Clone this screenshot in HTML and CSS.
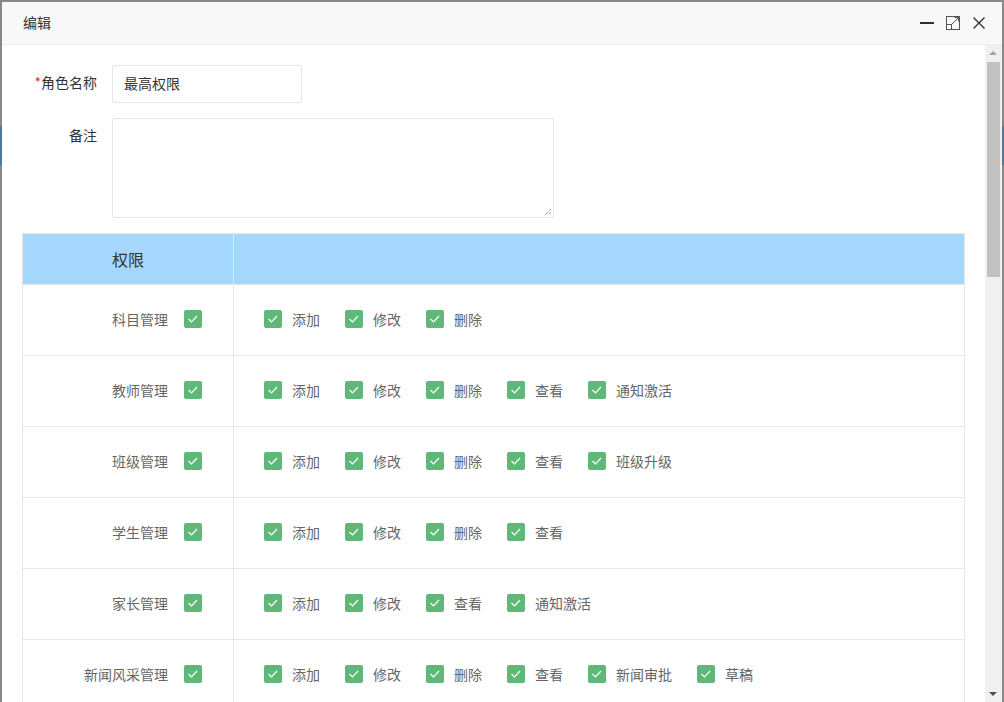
FILE: index.html
```html
<!DOCTYPE html>
<html lang="zh">
<head>
<meta charset="utf-8">
<title>编辑</title>
<link rel="stylesheet" href="styles.css">
</head>
<body>
<div class="dialog">
  <div class="title">
    <span class="title-text">编辑</span>
    <div class="tools">
      <svg class="ico" width="16" height="16" viewBox="0 0 16 16"><rect x="1" y="7" width="14" height="2" fill="#2f2f2f"/></svg>
      <svg class="ico" width="16" height="16" viewBox="0 0 16 16"><rect x="1.5" y="1.5" width="13" height="13" fill="none" stroke="#555" stroke-width="1"/><rect x="1.5" y="9.5" width="5" height="5" fill="#fff" stroke="#555" stroke-width="1"/><path d="M7 9 L13.5 2.5 M9.5 2.5 H13.5 V6.5" fill="none" stroke="#555" stroke-width="1"/></svg>
      <svg class="ico" width="16" height="16" viewBox="0 0 16 16"><path d="M2.5 2.5 L13.5 13.5 M13.5 2.5 L2.5 13.5" stroke="#333" stroke-width="1.4"/></svg>
    </div>
  </div>
  <div class="main">
    <div class="content">
      <div class="form-item">
        <label class="form-label"><span class="req">*</span>角色名称</label>
        <div class="input">最高权限</div>
      </div>
      <div class="form-item">
        <label class="form-label">备注</label>
        <div class="textarea">
          <svg class="grip" width="8" height="8" viewBox="0 0 8 8"><path d="M7 1 L1 7 M7 4 L4 7" stroke="#666" stroke-width="1" stroke-dasharray="1 1"/></svg>
        </div>
      </div>
      <div class="table">
        <div class="row head">
          <div class="c1 head-c1">权限</div>
          <div class="c2"></div>
        </div>
        <div class="row">
          <div class="c1"><span>科目管理</span><i class="cb"></i></div>
          <div class="c2">
            <span class="it"><i class="cb"></i>添加</span><span class="it"><i class="cb"></i>修改</span><span class="it"><i class="cb"></i>删除</span>
          </div>
        </div>
        <div class="row">
          <div class="c1"><span>教师管理</span><i class="cb"></i></div>
          <div class="c2">
            <span class="it"><i class="cb"></i>添加</span><span class="it"><i class="cb"></i>修改</span><span class="it"><i class="cb"></i>删除</span><span class="it"><i class="cb"></i>查看</span><span class="it"><i class="cb"></i>通知激活</span>
          </div>
        </div>
        <div class="row">
          <div class="c1"><span>班级管理</span><i class="cb"></i></div>
          <div class="c2">
            <span class="it"><i class="cb"></i>添加</span><span class="it"><i class="cb"></i>修改</span><span class="it"><i class="cb"></i>删除</span><span class="it"><i class="cb"></i>查看</span><span class="it"><i class="cb"></i>班级升级</span>
          </div>
        </div>
        <div class="row">
          <div class="c1"><span>学生管理</span><i class="cb"></i></div>
          <div class="c2">
            <span class="it"><i class="cb"></i>添加</span><span class="it"><i class="cb"></i>修改</span><span class="it"><i class="cb"></i>删除</span><span class="it"><i class="cb"></i>查看</span>
          </div>
        </div>
        <div class="row">
          <div class="c1"><span>家长管理</span><i class="cb"></i></div>
          <div class="c2">
            <span class="it"><i class="cb"></i>添加</span><span class="it"><i class="cb"></i>修改</span><span class="it"><i class="cb"></i>查看</span><span class="it"><i class="cb"></i>通知激活</span>
          </div>
        </div>
        <div class="row">
          <div class="c1"><span>新闻风采管理</span><i class="cb"></i></div>
          <div class="c2">
            <span class="it"><i class="cb"></i>添加</span><span class="it"><i class="cb"></i>修改</span><span class="it"><i class="cb"></i>删除</span><span class="it"><i class="cb"></i>查看</span><span class="it"><i class="cb"></i>新闻审批</span><span class="it"><i class="cb"></i>草稿</span>
          </div>
        </div>
      </div>
    </div>
    <div class="scrollbar">
      <div class="arrow up"></div>
      <div class="track"><div class="thumb"></div></div>
      <div class="arrow down"></div>
    </div>
  </div>
</div>
</body>
</html>
```

FILE: styles.css
```css
* { box-sizing: border-box; }
html, body { margin: 0; padding: 0; }
body {
  width: 1004px;
  height: 702px;
  overflow: hidden;
  font-family: "Noto Sans CJK SC", "Noto Sans", sans-serif;
  font-size: 14px;
  color: #333;
  background: linear-gradient(to bottom, #888 0, #888 126px, #52789a 126px, #52789a 165px, #888 165px);
}
.dialog {
  margin: 2px 2px 0 2px;
  height: 700px;
  background: #fff;
  display: flex;
  flex-direction: column;
}
.title {
  height: 43px;
  flex: none;
  background: #f8f8f8;
  border-bottom: 1px solid #eee;
  display: flex;
  align-items: center;
  justify-content: space-between;
  padding: 0 15px 0 21px;
}
.title-text { font-size: 14px; color: #333; padding-bottom: 3px; }
.tools { display: flex; align-items: center; gap: 10px; }
.ico { display: block; }
.main {
  flex: 1;
  min-height: 0;
  display: flex;
}
.content {
  flex: 1;
  overflow: hidden;
  padding: 20px 20px 0 0;
}
.form-item {
  display: flex;
  align-items: flex-start;
  margin-bottom: 15px;
}
.form-label {
  width: 110px;
  padding: 7px 15px 11px 0;
  line-height: 20px;
  text-align: right;
  color: #333;
}
.req { color: #ff2a2a; }
.input {
  width: 190px;
  height: 38px;
  border: 1px solid #e6e6e6;
  border-radius: 2px;
  line-height: 34px;
  padding: 0 0 2px 11px;
  color: #333;
}
.textarea {
  position: relative;
  width: 442px;
  height: 100px;
  border: 1px solid #e6e6e6;
  border-radius: 2px;
}
.grip { position: absolute; right: 1px; bottom: 1px; }
.table {
  margin-left: 20px;
  border: 1px solid #e6e6e6;
  border-bottom: none;
}
.row {
  display: flex;
  height: 71px;
  border-bottom: 1px solid #e6e6e6;
  padding-bottom: 2px;
  color: #666;
}
.row.head { height: 51px; background: #a5d6fc; padding-bottom: 1px; }
.c1 {
  width: 211px;
  flex: none;
  border-right: 1px solid #e6e6e6;
  margin-bottom: -2px;
  padding-bottom: 2px;
  display: flex;
  align-items: center;
  justify-content: flex-end;
  padding-right: 31px;
  gap: 16px;
}
.head-c1 {
  justify-content: center;
  padding-right: 0;
  margin-bottom: -1px;
  padding-bottom: 1px;
  font-size: 16px;
  color: #333;
}
.c2 {
  flex: 1;
  display: flex;
  align-items: center;
  padding-left: 30px;
}
.it {
  display: flex;
  align-items: center;
  margin-right: 25px;
}
.it .cb { margin-right: 10px; }
.cb {
  display: block;
  width: 18px;
  height: 18px;
  border-radius: 2px;
  background: #5fb878 url("data:image/svg+xml;utf8,<svg xmlns='http://www.w3.org/2000/svg' width='18' height='18' viewBox='0 0 18 18'><path d='M4.5 9 L7.5 12 L13 6' fill='none' stroke='white' stroke-width='1.2'/></svg>") no-repeat center;
}
.scrollbar {
  width: 17px;
  flex: none;
  background: #f0f0f0;
  display: flex;
  flex-direction: column;
}
.arrow { height: 17px; flex: none; position: relative; }
.arrow::after {
  content: "";
  position: absolute;
  left: 4px;
  width: 0; height: 0;
  border-left: 4px solid transparent;
  border-right: 4px solid transparent;
}
.arrow.up::after { top: 6px; border-bottom: 4px solid #a3a3a3; }
.arrow.down::after { top: 7px; border-top: 4px solid #505050; }
.track { flex: 1; padding: 0 2px; }
.thumb { height: 215px; background: #c1c1c1; }
```
